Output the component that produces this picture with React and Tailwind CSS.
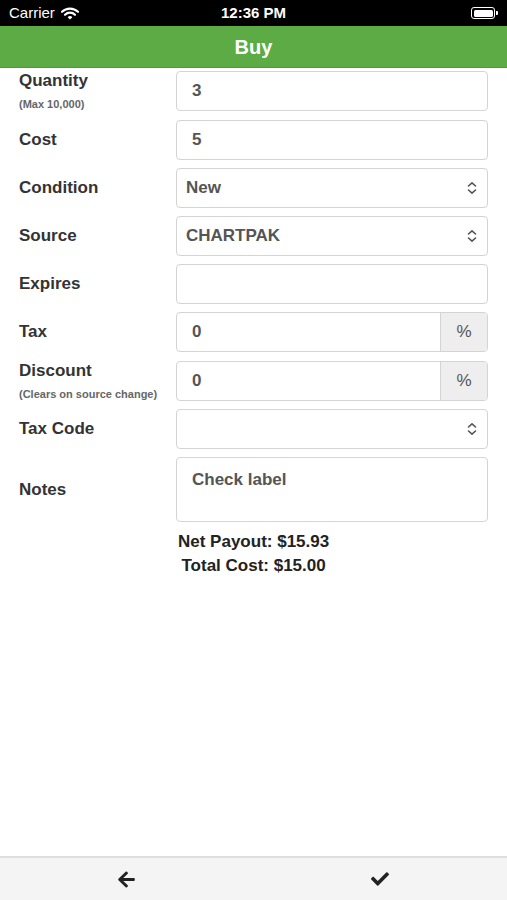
import React from "react";
import { FaArrowLeft, FaCheck } from "react-icons/fa";

const font = { fontFamily: '"Liberation Sans", Arial, sans-serif' };

const Select = ({ value }) => (
  <div className="flex items-center justify-between w-full h-[40px] px-[9px] border border-[#d4d4d4] rounded-[4px] bg-white">
    <span className="text-[17px] font-bold text-[#555]">{value}</span>
    <svg width="10" height="14" viewBox="0 0 10 14" className="mr-[1px]">
      <path d="M1.5 5 L5 1.8 L8.5 5" fill="none" stroke="#555" strokeWidth="1.6" strokeLinecap="round" strokeLinejoin="round" />
      <path d="M1.5 9 L5 12.2 L8.5 9" fill="none" stroke="#555" strokeWidth="1.6" strokeLinecap="round" strokeLinejoin="round" />
    </svg>
  </div>
);

const Input = ({ value }) => (
  <div className="flex items-center w-full h-[40px] px-[15px] border border-[#d4d4d4] rounded-[4px] bg-white">
    <span className="text-[17px] font-bold text-[#555]">{value}</span>
  </div>
);

const Percent = ({ value }) => (
  <div className="flex w-full h-[40px] border border-[#d4d4d4] rounded-[4px] bg-white overflow-hidden">
    <div className="flex items-center flex-1 px-[15px]">
      <span className="text-[17px] font-bold text-[#555]">{value}</span>
    </div>
    <div className="flex items-center justify-center w-[47px] bg-[#eee] border-l border-[#d4d4d4] text-[17px] text-[#555]">
      %
    </div>
  </div>
);

const Row = ({ label, hint, children, className = "" }) => (
  <div className={`flex items-center ${className}`}>
    <div className="w-[176px] pl-[19px] shrink-0">
      <div className="text-[17px] font-bold text-[#333] leading-[20px]">{label}</div>
      {hint && <div className="text-[11px] font-bold text-[#666] mt-[7px] leading-[13px]">{hint}</div>}
    </div>
    <div className="w-[312px]">{children}</div>
  </div>
);

export default function App() {
  return (
    <div className="w-[507px] h-[900px] flex flex-col bg-white" style={font}>
      {/* status bar */}
      <div className="relative flex items-center h-[26px] bg-black text-white px-[9px]">
        <span className="text-[15px]">Carrier</span>
        <svg width="18" height="13" viewBox="0 0 18 13" className="ml-[6px]">
          <path d="M1 4.8 A11.5 11.5 0 0 1 17 4.8" fill="none" stroke="white" strokeWidth="2.2" strokeLinecap="round" />
          <path d="M4 7.8 A7 7 0 0 1 14 7.8" fill="none" stroke="white" strokeWidth="2.2" strokeLinecap="round" />
          <path d="M9 12.5 L6.6 10.2 A3.4 3.4 0 0 1 11.4 10.2 Z" fill="white" />
        </svg>
        <span className="absolute left-0 right-0 text-center text-[15px] font-semibold pointer-events-none">12:36 PM</span>
        <div className="ml-auto flex items-center">
          <div className="w-[24px] h-[12px] rounded-[3px] border border-white p-[1.5px]">
            <div className="w-full h-full bg-white rounded-[1.5px]" />
          </div>
          <div className="w-[2px] h-[4px] bg-white rounded-r-[1px] ml-[1px]" />
        </div>
      </div>

      {/* header */}
      <div className="flex items-center justify-center h-[42px] bg-[#5cab44] border-b border-[#4e9c38]">
        <span className="text-[20px] font-bold text-white">Buy</span>
      </div>

      {/* form */}
      <div className="flex flex-col gap-[8px] pt-[3px]">
        <Row label="Quantity" hint="(Max 10,000)">
          <Input value="3" />
        </Row>
        <Row label="Cost" className="pt-[1px]">
          <Input value="5" />
        </Row>
        <Row label="Condition">
          <Select value="New" />
        </Row>
        <Row label="Source">
          <Select value="CHARTPAK" />
        </Row>
        <Row label="Expires">
          <Input value="" />
        </Row>
        <Row label="Tax">
          <Percent value="0" />
        </Row>
        <Row label="Discount" hint="(Clears on source change)" className="pt-[1px]">
          <Percent value="0" />
        </Row>
        <Row label="Tax Code">
          <Select value="" />
        </Row>
        <Row label="Notes">
          <div className="w-full h-[65px] px-[15px] pt-[9px] border border-[#d4d4d4] rounded-[4px] bg-white">
            <span className="text-[17px] font-bold text-[#555]">Check label</span>
          </div>
        </Row>
      </div>

      <div className="pl-[176px] pt-[8px]">
        <div className="inline-block text-center text-[17px] font-bold text-[#222] leading-[24px] pl-[2px]">
          <div>Net Payout: $15.93</div>
          <div>Total Cost: $15.00</div>
        </div>
      </div>

      {/* bottom bar */}
      <div className="mt-auto flex h-[44px] bg-[#f4f4f4] border-t-2 border-[#dedede]">
        <button className="flex-1 flex items-center justify-center text-[#222]">
          <FaArrowLeft size={19} />
        </button>
        <button className="flex-1 flex items-center justify-center text-[#222]">
          <FaCheck size={18} />
        </button>
      </div>
    </div>
  );
}
